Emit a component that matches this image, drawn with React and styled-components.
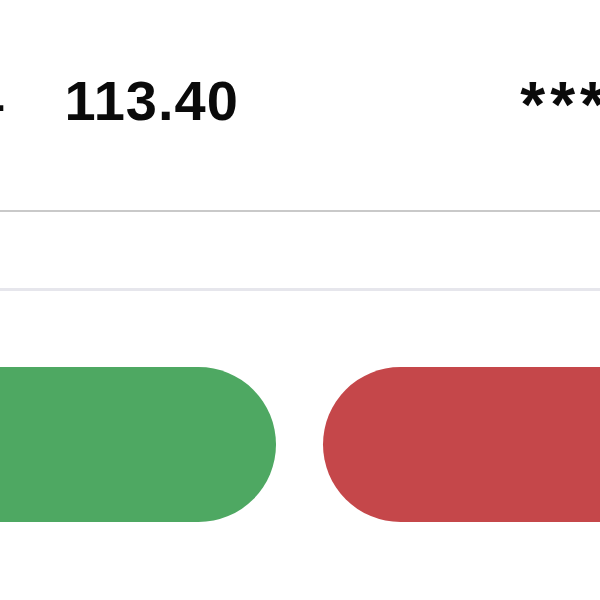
import styled, { createGlobalStyle } from "styled-components";

const Global = createGlobalStyle`
  html, body { margin:0; padding:0; background:#ffffff; overflow:hidden; }
  body { font-family:"Liberation Sans", Arial, sans-serif; }
`

export default function App(){
    return(
        <Page>
            <Global/>
            <Linha>
                <Anterior>4</Anterior>
                <Valor>113.40</Valor>
                <Oculto>***</Oculto>
            </Linha>
            <Divisor cor="#c9c9c9" espessura={2}/>
            <Vazio/>
            <Divisor cor="#e6e6ec" espessura={3}/>
            <Botoes>
                <Botao cor="#4ea862" largura={356}/>
                <Botao cor="#c5474a" largura={420}/>
            </Botoes>
        </Page>
    )
}

const Page=styled.div`
    width:600px;
    height:600px;
    overflow:hidden;
    display:flex;
    flex-direction:column;
`
const Linha=styled.div`
    display:flex;
    align-items:flex-start;
    height:210px;
    box-sizing:border-box;
    padding-top:73px;
    margin-left:-27px;
    gap:61px;
    font-weight:700;
    font-size:55px;
    line-height:55px;
    color:#0a0a0a;
    white-space:nowrap;
`
const Anterior=styled.span``
const Valor=styled.span`
    font-size:56px;
    letter-spacing:1px;
`
const Oculto=styled.span`
    margin-left:auto;
    margin-right:-10px;
    font-size:64px;
    line-height:64px;
    letter-spacing:5px;
`
const Divisor=styled.div`
    height:${p=>p.espessura}px;
    background:${p=>p.cor};
    flex-shrink:0;
`
const Vazio=styled.div`
    height:76px;
    flex-shrink:0;
`
const Botoes=styled.div`
    display:flex;
    gap:47px;
    margin-top:76px;
    margin-left:-80px;
`
const Botao=styled.div`
    flex-shrink:0;
    width:${p=>p.largura}px;
    height:155px;
    border-radius:78px;
    background:${p=>p.cor};
`
